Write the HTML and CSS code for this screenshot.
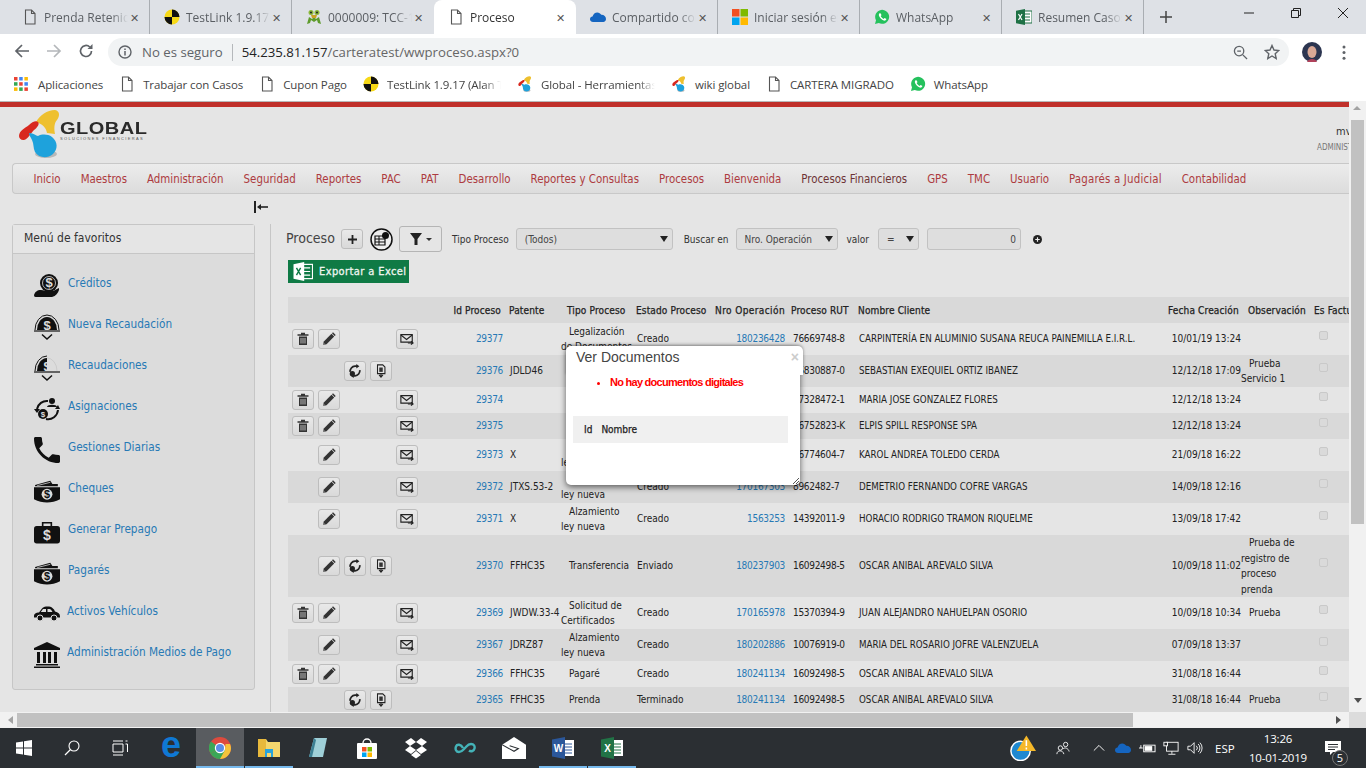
FILE: index.html
```html
<!DOCTYPE html>
<html lang="es">
<head>
    <meta charset="UTF-8">
    <title>Proceso</title>
    <link rel="stylesheet" href="styles.css">
</head>
<body>
    <!-- Iconos -->
    <svg class="defs" width="0" height="0">
        <defs>
            <symbol id="doc" viewBox="0 0 12 16"><path d="M1.5 1h6l3.500 3.500V15h-9.500z M7.500 1v3.500H11" fill="none" stroke="#555" stroke-width="1.100"/></symbol>
            <symbol id="testlink" viewBox="0 0 16 16"><circle cx="8" cy="8" r="7.500" fill="#f7d917"/><path d="M8 .5A7.500 7.500 0 0 1 15.500 8H8zM8 8v7.500A7.500 7.500 0 0 1 .5 8z" fill="#111"/></symbol>
            <symbol id="mantis" viewBox="0 0 16 16"><path d="M1 15l2-7 3 2 2-2 2 2 3-2 2 7-3-1-1-3-3 2-3-2-1 3z" fill="#5e9b2c"/><circle cx="5" cy="3.500" r="2.500" fill="#8ab83a"/><circle cx="11" cy="3.500" r="2.500" fill="#8ab83a"/><circle cx="5" cy="3.500" r="1" fill="#222"/><circle cx="11" cy="3.500" r="1" fill="#222"/><path d="M5 6h6l-1 3H6z" fill="#c9a227"/></symbol>
            <symbol id="onedrive" viewBox="0 0 18 12"><path d="M3.500 11.500C1 11.500 0 9.800 0 8.500 0 6.800 1.300 5.600 2.800 5.500 3.500 2.500 5.800.8 8.200.8c2 0 3.600 1 4.500 2.700 2.800-.2 5.300 1.900 5.300 4.700 0 1.900-1.300 3.300-3 3.300z" fill="#1565c0"/></symbol>
            <symbol id="ms" viewBox="0 0 16 16"><rect width="7.500" height="7.500" fill="#f25022"/><rect x="8.500" width="7.500" height="7.500" fill="#7fba00"/><rect y="8.500" width="7.500" height="7.500" fill="#00a4ef"/><rect x="8.500" y="8.500" width="7.500" height="7.500" fill="#ffb900"/></symbol>
            <symbol id="whatsapp" viewBox="0 0 16 16"><path d="M1 15l1-3.800A7 7 0 1 1 4.800 14z" fill="#25c15d"/><path d="M5.600 4.300c-.8.600-1 1.700-.4 3 .8 1.800 2.500 3.500 4.500 4.200 1.200.4 2.200 0 2.600-.9l-.1-.9-1.700-.8-.8 1c-1.200-.4-2.400-1.500-3-2.800l.8-.8-.7-1.800z" fill="#fff"/></symbol>
            <symbol id="excel" viewBox="0 0 16 16"><rect x="6" y="2" width="10" height="12" fill="#fff" stroke="#1e7145"/><path d="M9 5h5M9 8h5M9 11h5" stroke="#1e7145"/><path d="M0 1.800 9 0v16L0 14.200z" fill="#1e7145"/><path d="M2.500 5l3.500 6M6 5l-3.500 6" stroke="#fff" stroke-width="1.200"/></symbol>
            <symbol id="global" viewBox="0 0 42 50"><ellipse cx="27" cy="45" rx="11" ry="4" fill="#b8b8b8"/><path d="M17 13C21 6 28 1 36 1c5 1 5 6 2 10-3 3-3 9-2 14l-8-1c-1-6-5-9-11-11z" fill="#eec02f"/><path d="M0 27c0-5 6-8 10-11 3-3 7-5 9-3 2 2-1 6-4 8-3 3-6 9-10 10-3 .5-5-2-5-4z" fill="#d8281e"/><path d="M10 24c5 0 7 3 9 3 4-2 10-2 14 1 6 5 6 12 1 17-6 5-14 4-18-2-2-4-1-8-3-12-1-2-3-5-3-7z" fill="#1ea2dc"/></symbol>
            <symbol id="apps" viewBox="0 0 14 14"><g><rect width="3.500" height="3.500" fill="#ea4335"/><rect x="5.200" width="3.500" height="3.500" fill="#4285f4"/><rect x="10.400" width="3.500" height="3.500" fill="#fbbc05"/><rect y="5.200" width="3.500" height="3.500" fill="#34a853"/><rect x="5.200" y="5.200" width="3.500" height="3.500" fill="#ea4335"/><rect x="10.400" y="5.200" width="3.500" height="3.500" fill="#4285f4"/><rect y="10.400" width="3.500" height="3.500" fill="#fbbc05"/><rect x="5.200" y="10.400" width="3.500" height="3.500" fill="#34a853"/><rect x="10.400" y="10.400" width="3.500" height="3.500" fill="#ea4335"/></g></symbol>

            <symbol id="trash" viewBox="0 0 14 14"><path d="M5 1.500h4M1.500 3h11" stroke="#333" stroke-width="1.500" fill="none"/><path d="M3 4.500h8V13H3z" fill="#333"/><path d="M5 6v5.500M7 6v5.500M9 6v5.500" stroke="#ddd" stroke-width=".8"/></symbol>
            <symbol id="pencil" viewBox="0 0 14 14"><path d="M1 13l.8-3.500L9.500 1.800l2.700 2.700-7.700 7.700z" fill="#333"/><path d="M10.500.8l2.700 2.700" stroke="#333" stroke-width="1.500"/><path d="M1 13l.6-2.400 1.800 1.800z" fill="#888"/></symbol>
            <symbol id="mail" viewBox="0 0 16 14"><path d="M1 2h13v8.500H1z" fill="none" stroke="#222" stroke-width="1.300"/><path d="M1 2.500l6.500 5 6.500-5" fill="none" stroke="#222" stroke-width="1.300"/><path d="M9 11.500h5M12.500 9.500l2.500 2-2.500 2" fill="none" stroke="#222" stroke-width="1.200"/></symbol>
            <symbol id="refresh" viewBox="0 0 16 16"><path d="M2.500 9A5.800 5.800 0 0 1 8 2.500h2.500M13.500 7A5.800 5.800 0 0 1 8 13.500H5.500" fill="none" stroke="#222" stroke-width="2"/><path d="M9.500 0l3.500 2.500L9.500 5zM6.500 11L3 13.500 6.500 16z" fill="#222"/><circle cx="5" cy="11" r="3" fill="#222"/></symbol>
            <symbol id="docdown" viewBox="0 0 12 16"><path d="M2 1h6l2.500 2.500V11H2z" fill="none" stroke="#222" stroke-width="1.200"/><path d="M4 4h4v5H4z" fill="#333"/><path d="M6 11v3M3.800 12.500L6 15l2.200-2.500" fill="none" stroke="#222" stroke-width="1.200"/></symbol>

            <symbol id="credito" viewBox="0 0 26 24"><circle cx="15" cy="9" r="9" fill="#111"/><circle cx="15" cy="9" r="6.500" fill="none" stroke="#ddd" stroke-width=".8"/><text x="15" y="13" class="sym-d">$</text><path d="M0 21c1-3 3-5 7-5 3 0 4 1 6 1h5c2 0 4-2 7-3v2c-1 3-3 6-7 7H3c-2 0-3 0-3-2z" fill="#111"/></symbol>
            <symbol id="nueva" viewBox="0 0 26 26"><path d="M3 16a10 13 0 0 1 20 0z" fill="#111"/><path d="M1 16a12 15 0 0 1 24 0" fill="none" stroke="#111"/><text x="13" y="16" class="sym-d">$</text><path d="M0 17h26" stroke="#111" stroke-width="1.200"/><path d="M8 20.500l5 4.500 5-4.500" fill="none" stroke="#111" stroke-width="1.500"/></symbol>
            <symbol id="recaud" viewBox="0 0 26 26"><path d="M13 3a10 13 0 0 0-10 13h10z" fill="#111"/><path d="M1 16A12 15 0 0 1 13 1" fill="none" stroke="#111"/><path d="M13 3a10 13 0 0 1 10 13" fill="none" stroke="#ccc"/><text x="13" y="16" class="sym-d">$</text><path d="M0 17h26" stroke="#111" stroke-width="1.200"/><path d="M8 20.500l5 4.500 5-4.500" fill="none" stroke="#111" stroke-width="1.500"/></symbol>
            <symbol id="asigna" viewBox="0 0 26 24"><path d="M3 12A10 10 0 0 1 14 4M24 13a10 10 0 0 1-12 9" fill="none" stroke="#111" stroke-width="2"/><path d="M0 12l3 4 3-4zM26 12l-2-4-3 4z" fill="#111"/><circle cx="18" cy="4" r="3" fill="#111"/><path d="M13 10c0-3 10-3 10 0z" fill="#111"/><circle cx="9" cy="17" r="5" fill="#111"/><text x="9" y="20" class="sym-s">$</text></symbol>
            <symbol id="phone" viewBox="3 3 18 18"><path d="M6.620 10.790c1.440 2.830 3.760 5.140 6.590 6.590l2.200-2.200c.27-.27.67-.36 1.020-.24 1.120.37 2.330.57 3.570.57.55 0 1 .45 1 1V20c0 .55-.45 1-1 1-9.390 0-17-7.610-17-17 0-.55.45-1 1-1h3.500c.55 0 1 .45 1 1 0 1.250.2 2.450.57 3.570.11.35.03.74-.25 1.020l-2.200 2.200z" fill="#111"/></symbol>
            <symbol id="billete" viewBox="0 0 24 21"><path d="M1 5l14-4 2 3h5v2H1z" fill="#111"/><path d="M0 7h24v11c-4 2-8 3-12 3S4 20 0 18z" fill="#111"/><path d="M3 5.500l12-3" stroke="#ddd" stroke-width=".7"/><circle cx="12" cy="13.500" r="5" fill="#ddd"/><text x="12" y="17" class="sym-k">$</text></symbol>
            <symbol id="maletin" viewBox="0 0 24 21"><path d="M8 5V2h8v3" fill="none" stroke="#111" stroke-width="1.500"/><rect y="5" width="24" height="16" rx="2.500" fill="#111"/><text x="12" y="18" class="sym-d">$</text></symbol>
            <symbol id="auto" viewBox="0 0 26 15"><path d="M0 10c0-3 2-4 5-4l3-4c1-1 2-2 4-2h3c2 0 3 1 5 3l1 2c3 1 5 2 5 5v1H0z" fill="#111"/><path d="M9 2.500h3v3H6.800zM13.500 2.500h2c1 0 2 1 3 3h-5z" fill="#ddd"/><circle cx="6" cy="11.500" r="3" fill="#111" stroke="#ddd"/><circle cx="20" cy="11.500" r="3" fill="#111" stroke="#ddd"/></symbol>
            <symbol id="banco" viewBox="0 0 26 26"><path d="M13 0l13 6v2H0V6z" fill="#111"/><path d="M3 10h3v11H3zM9 10h3v11H9zM14 10h3v11h-3zM20 10h3v11h-3z" fill="#111"/><path d="M2 22h22v1.500H2zM0 24.500h26V26H0z" fill="#111"/></symbol>
        </defs>
    </svg>

    <!-- Navegador -->
    <div class="tabstrip">
        <div class="tab"><svg class="tab-ico doc-ico"><use href="#doc"/></svg><span class="tab-title">Prenda Retenida</span><span class="tab-x">&#10005;</span></div>
        <div class="tab"><svg class="tab-ico"><use href="#testlink"/></svg><span class="tab-title">TestLink 1.9.17</span><span class="tab-x">&#10005;</span></div>
        <div class="tab"><svg class="tab-ico"><use href="#mantis"/></svg><span class="tab-title">0000009: TCC-1</span><span class="tab-x">&#10005;</span></div>
        <div class="tab tab-active"><svg class="tab-ico doc-ico"><use href="#doc"/></svg><span class="tab-title">Proceso</span><span class="tab-x">&#10005;</span></div>
        <div class="tab"><svg class="tab-ico"><use href="#onedrive"/></svg><span class="tab-title">Compartido con</span><span class="tab-x">&#10005;</span></div>
        <div class="tab"><svg class="tab-ico"><use href="#ms"/></svg><span class="tab-title">Iniciar sesión en</span><span class="tab-x">&#10005;</span></div>
        <div class="tab"><svg class="tab-ico"><use href="#whatsapp"/></svg><span class="tab-title">WhatsApp</span><span class="tab-x">&#10005;</span></div>
        <div class="tab"><svg class="tab-ico"><use href="#excel"/></svg><span class="tab-title">Resumen Casos</span><span class="tab-x">&#10005;</span></div>
        <svg class="newtab" viewBox="0 0 12 12"><path d="M6 0v12M0 6h12" stroke="#444" stroke-width="1.500"/></svg>
        <div class="winbtns">
            <svg viewBox="0 0 12 12"><path d="M1 6h10" stroke="#222"/></svg>
            <svg viewBox="0 0 12 12"><path d="M1.500 3.500h7v7h-7zM3.500 3.500v-2h7v7h-2" fill="none" stroke="#222"/></svg>
            <svg viewBox="0 0 12 12"><path d="M1 1l10 10M11 1L1 11" stroke="#222"/></svg>
        </div>
    </div>
    <div class="toolbar">
        <svg class="nav-ico" viewBox="0 0 16 16"><path d="M15 8H2M8 2L2 8l6 6" fill="none" stroke="#5f6368" stroke-width="1.700"/></svg>
        <svg class="nav-ico" viewBox="0 0 16 16"><path d="M1 8h13M8 2l6 6-6 6" fill="none" stroke="#b4b7ba" stroke-width="1.700"/></svg>
        <svg class="nav-ico" viewBox="0 0 16 16"><path d="M13.500 8A5.500 5.500 0 1 1 11.800 4" fill="none" stroke="#5f6368" stroke-width="1.700"/><path d="M14.500 1v5h-5z" fill="#5f6368"/></svg>
        <div class="omnibox">
            <svg class="info" viewBox="0 0 14 14"><circle cx="7" cy="7" r="6" fill="none" stroke="#5f6368" stroke-width="1.400"/><path d="M7 6v4.500M7 3.500v1.500" stroke="#5f6368" stroke-width="1.500"/></svg>
            <span class="insecure">No es seguro</span>
            <span class="url"><b>54.235.81.157</b>/carteratest/wwproceso.aspx?0</span>
            <svg class="zoom-ico" viewBox="0 0 16 16"><circle cx="6.500" cy="6.500" r="5" fill="none" stroke="#5f6368" stroke-width="1.400"/><path d="M4.500 6.500h4M10.500 10.500L15 15" stroke="#5f6368" stroke-width="1.400"/></svg>
            <svg class="star" viewBox="0 0 16 16"><path d="M8 1.500l2 4.500 4.800.5-3.600 3.200 1 4.800L8 12l-4.200 2.500 1-4.800L1.200 6.500 6 6z" fill="none" stroke="#5f6368" stroke-width="1.400"/></svg>
        </div>
        <svg class="avatar" viewBox="0 0 20 20"><circle cx="10" cy="10" r="10" fill="#2c3550"/><ellipse cx="10" cy="10" rx="4.500" ry="6" fill="#d9a896"/><path d="M5 20c1-4 9-4 10 0z" fill="#b0415a"/></svg>
        <svg class="dots" viewBox="0 0 4 16"><circle cx="2" cy="2" r="1.600" fill="#5f6368"/><circle cx="2" cy="8" r="1.600" fill="#5f6368"/><circle cx="2" cy="14" r="1.600" fill="#5f6368"/></svg>
    </div>
    <div class="bookmarks">
        <span class="bm bm-apps"><svg class="bm-ico"><use href="#apps"/></svg>Aplicaciones</span>
        <span class="bm"><svg class="bm-ico doc-ico"><use href="#doc"/></svg>Trabajar con Casos</span>
        <span class="bm"><svg class="bm-ico doc-ico"><use href="#doc"/></svg>Cupon Pago</span>
        <span class="bm"><svg class="bm-ico"><use href="#testlink"/></svg><span class="bm-fade">TestLink 1.9.17 (Alan T</span></span>
        <span class="bm"><svg class="bm-ico"><use href="#global"/></svg><span class="bm-fade">Global - Herramientas</span></span>
        <span class="bm"><svg class="bm-ico"><use href="#global"/></svg>wiki global</span>
        <span class="bm"><svg class="bm-ico doc-ico"><use href="#doc"/></svg>CARTERA MIGRADO</span>
        <span class="bm"><svg class="bm-ico"><use href="#whatsapp"/></svg>WhatsApp</span>
    </div>

    <!-- Pagina -->
    <div class="viewport">
        <div class="viewport-row">
            <div class="page">
                <div class="page-head">
                    <div class="logo">
                        <svg class="logo-mark"><use href="#global"/></svg>
                        <div class="logo-text">
                            <div class="logo-name">GLOBAL</div>
                            <div class="logo-sub">SOLUCIONES FINANCIERAS</div>
                        </div>
                    </div>
                    <div class="user">
                        <div class="user-name">mvargas</div>
                        <div class="user-role">ADMINISTRADOR</div>
                    </div>
                </div>

                <ul class="menu">
                    <li>Inicio</li>
                    <li>Maestros</li>
                    <li>Administración</li>
                    <li>Seguridad</li>
                    <li>Reportes</li>
                    <li>PAC</li>
                    <li>PAT</li>
                    <li>Desarrollo</li>
                    <li>Reportes y Consultas</li>
                    <li>Procesos</li>
                    <li>Bienvenida</li>
                    <li class="menu-hover">Procesos Financieros</li>
                    <li>GPS</li>
                    <li>TMC</li>
                    <li>Usuario</li>
                    <li class="menu-wide">Pagarés a Judicial</li>
                    <li>Contabilidad</li>
                </ul>

                <div class="collapse-row">
                    <svg class="collapse" viewBox="0 0 14 12"><path d="M1 0v12" stroke="#222" stroke-width="2"/><path d="M14 6H5" stroke="#222" stroke-width="1.600"/><path d="M3 6l4-3v6z" fill="#222"/></svg>
                </div>

                <div class="main">
                    <aside class="favs">
                        <div class="favs-head">Menú de favoritos</div>
                        <ul class="favs-list">
                            <li><svg class="fav-ico"><use href="#credito"/></svg><a>Créditos</a></li>
                            <li><svg class="fav-ico"><use href="#nueva"/></svg><a>Nueva Recaudación</a></li>
                            <li><svg class="fav-ico"><use href="#recaud"/></svg><a>Recaudaciones</a></li>
                            <li><svg class="fav-ico"><use href="#asigna"/></svg><a>Asignaciones</a></li>
                            <li><svg class="fav-ico"><use href="#phone"/></svg><a>Gestiones Diarias</a></li>
                            <li><svg class="fav-ico"><use href="#billete"/></svg><a>Cheques</a></li>
                            <li><svg class="fav-ico"><use href="#maletin"/></svg><a>Generar Prepago</a></li>
                            <li><svg class="fav-ico"><use href="#billete"/></svg><a>Pagarés</a></li>
                            <li class="fav-wide"><svg class="fav-ico"><use href="#auto"/></svg><a>Activos Vehículos</a></li>
                            <li class="fav-wide"><svg class="fav-ico"><use href="#banco"/></svg><a>Administración Medios de Pago</a></li>
                        </ul>
                    </aside>

                    <section class="content">
                        <div class="filters">
                            <span class="content-title">Proceso</span>
                            <button class="btn btn-plus"><svg viewBox="0 0 10 10"><path d="M5 0v10M0 5h10" stroke="#222" stroke-width="2"/></svg></button>
                            <svg class="round-ico" viewBox="0 0 23 23"><circle cx="11.500" cy="11.500" r="10.500" fill="#eee" stroke="#111" stroke-width="1.500"/><path d="M5 8h10v9H5z" fill="none" stroke="#111" stroke-width="1.200"/><path d="M5 11h10M5 14h10M9 8v9" stroke="#111"/><circle cx="15.500" cy="7.500" r="3.500" fill="#111"/></svg>
                            <button class="btn btn-filter"><svg viewBox="0 0 12 12"><path d="M0 0h12L7.500 6v6h-3V6z" fill="#222"/></svg><i class="caret"></i></button>
                            <label class="flabel label-tipo">Tipo Proceso</label>
                            <div class="sel sel-tipo">(Todos)<i class="tri"></i></div>
                            <label class="flabel label-buscar">Buscar en</label>
                            <div class="sel sel-buscar">Nro. Operación<i class="tri"></i></div>
                            <label class="flabel label-valor">valor</label>
                            <div class="sel sel-op">=<i class="tri"></i></div>
                            <div class="sel sel-val">0</div>
                            <svg class="plus-circle" viewBox="0 0 10 10"><circle cx="5" cy="5" r="5" fill="#222"/><path d="M5 2.500v5M2.500 5h5" stroke="#eee" stroke-width="1.300"/></svg>
                        </div>

                        <button class="export"><svg viewBox="0 0 16 16"><rect x="6" y="2" width="10" height="12" fill="none" stroke="#fff"/><path d="M8 5h6M8 8h6M8 11h6" stroke="#fff"/><path d="M0 1.800 9 0v16L0 14.200z" fill="#fff"/><path d="M2.500 5l3.500 6M6 5l-3.500 6" stroke="#0f7a45" stroke-width="1.200"/></svg>Exportar a Excel</button>

                        <table class="grid">
                            <colgroup>
                                <col class="c-act"><col class="c-id"><col class="c-pat"><col class="c-tipo"><col class="c-est"><col class="c-op"><col class="c-rut"><col class="c-cli"><col class="c-fec"><col class="c-obs"><col class="c-fac">
                            </colgroup>
                            <thead>
                                <tr>
                                    <th></th>
                                    <th class="r">Id Proceso</th>
                                    <th>Patente</th>
                                    <th class="th-tipo">Tipo Proceso</th>
                                    <th>Estado Proceso</th>
                                    <th class="r">Nro Operación</th>
                                    <th>Proceso RUT</th>
                                    <th class="th-cli">Nombre Cliente</th>
                                    <th class="th-fec">Fecha Creación</th>
                                    <th class="th-obs">Observación</th>
                                    <th class="th-fac">Es Factura</th>
                                </tr>
                            </thead>
                            <tbody>
                                <tr class="h32">
                                    <td><div class="acts"><button class="btn a1"><svg><use href="#trash"/></svg></button><button class="btn a2"><svg><use href="#pencil"/></svg></button><button class="btn a5"><svg><use href="#mail"/></svg></button></div></td>
                                    <td class="r"><a>29377</a></td><td class="pat"></td><td class="ind">Legalización de Documentos</td><td class="est">Creado</td><td class="r"><a>180236428</a></td><td class="rut">76669748-8</td><td class="cli">CARPINTERÍA EN ALUMINIO SUSANA REUCA PAINEMILLA E.I.R.L.</td><td class="fec">10/01/19 13:24</td><td class="ind"></td><td class="fac"><i class="chk"></i></td>
                                </tr>
                                <tr class="h32">
                                    <td><div class="acts"><button class="btn a3"><svg><use href="#refresh"/></svg></button><button class="btn a4"><svg><use href="#docdown"/></svg></button></div></td>
                                    <td class="r"><a>29376</a></td><td class="pat">JDLD46</td><td class="ind">Prenda</td><td class="est">Enviado</td><td class="r"><a>180236101</a></td><td class="rut">15830887-0</td><td class="cli">SEBASTIAN EXEQUIEL ORTIZ IBANEZ</td><td class="fec">12/12/18 17:09</td><td class="ind">Prueba Servicio 1</td><td class="fac"><i class="chk"></i></td>
                                </tr>
                                <tr class="h26">
                                    <td><div class="acts"><button class="btn a1"><svg><use href="#trash"/></svg></button><button class="btn a2"><svg><use href="#pencil"/></svg></button><button class="btn a5"><svg><use href="#mail"/></svg></button></div></td>
                                    <td class="r"><a>29374</a></td><td class="pat"></td><td class="ind">Pagaré</td><td class="est">Creado</td><td class="r"><a>180235907</a></td><td class="rut">17328472-1</td><td class="cli">MARIA JOSE GONZALEZ FLORES</td><td class="fec">12/12/18 13:24</td><td class="ind"></td><td class="fac"><i class="chk"></i></td>
                                </tr>
                                <tr class="h26">
                                    <td><div class="acts"><button class="btn a1"><svg><use href="#trash"/></svg></button><button class="btn a2"><svg><use href="#pencil"/></svg></button><button class="btn a5"><svg><use href="#mail"/></svg></button></div></td>
                                    <td class="r"><a>29375</a></td><td class="pat"></td><td class="ind">Pagaré</td><td class="est">Creado</td><td class="r"><a>180235908</a></td><td class="rut">76752823-K</td><td class="cli">ELPIS SPILL RESPONSE SPA</td><td class="fec">12/12/18 13:24</td><td class="ind"></td><td class="fac"><i class="chk"></i></td>
                                </tr>
                                <tr class="h32">
                                    <td><div class="acts"><button class="btn a2"><svg><use href="#pencil"/></svg></button><button class="btn a5"><svg><use href="#mail"/></svg></button></div></td>
                                    <td class="r"><a>29373</a></td><td class="pat">X</td><td class="ind">Alzamiento ley nueva</td><td class="est">Creado</td><td class="r"><a>170167310</a></td><td class="rut">16774604-7</td><td class="cli">KAROL ANDREA TOLEDO CERDA</td><td class="fec">21/09/18 16:22</td><td class="ind"></td><td class="fac"><i class="chk"></i></td>
                                </tr>
                                <tr class="h32">
                                    <td><div class="acts"><button class="btn a2"><svg><use href="#pencil"/></svg></button><button class="btn a5"><svg><use href="#mail"/></svg></button></div></td>
                                    <td class="r"><a>29372</a></td><td class="pat">JTXS.53-2</td><td class="ind">Alzamiento ley nueva</td><td class="est">Creado</td><td class="r"><a>170167303</a></td><td class="rut">8962482-7</td><td class="cli">DEMETRIO FERNANDO COFRE VARGAS</td><td class="fec">14/09/18 12:16</td><td class="ind"></td><td class="fac"><i class="chk"></i></td>
                                </tr>
                                <tr class="h32">
                                    <td><div class="acts"><button class="btn a2"><svg><use href="#pencil"/></svg></button><button class="btn a5"><svg><use href="#mail"/></svg></button></div></td>
                                    <td class="r"><a>29371</a></td><td class="pat">X</td><td class="ind">Alzamiento ley nueva</td><td class="est">Creado</td><td class="r"><a>1563253</a></td><td class="rut">14392011-9</td><td class="cli">HORACIO RODRIGO TRAMON RIQUELME</td><td class="fec">13/09/18 17:42</td><td class="ind"></td><td class="fac"><i class="chk"></i></td>
                                </tr>
                                <tr class="h62">
                                    <td><div class="acts"><button class="btn a2"><svg><use href="#pencil"/></svg></button><button class="btn a3"><svg><use href="#refresh"/></svg></button><button class="btn a4"><svg><use href="#docdown"/></svg></button></div></td>
                                    <td class="r"><a>29370</a></td><td class="pat">FFHC35</td><td class="ind">Transferencia</td><td class="est">Enviado</td><td class="r"><a>180237903</a></td><td class="rut">16092498-5</td><td class="cli">OSCAR ANIBAL AREVALO SILVA</td><td class="fec">10/09/18 11:02</td><td class="ind">Prueba de registro de proceso prenda</td><td class="fac"><i class="chk"></i></td>
                                </tr>
                                <tr class="h32">
                                    <td><div class="acts"><button class="btn a1"><svg><use href="#trash"/></svg></button><button class="btn a2"><svg><use href="#pencil"/></svg></button><button class="btn a5"><svg><use href="#mail"/></svg></button></div></td>
                                    <td class="r"><a>29369</a></td><td class="pat">JWDW.33-4</td><td class="ind">Solicitud de Certificados</td><td class="est">Creado</td><td class="r"><a>170165978</a></td><td class="rut">15370394-9</td><td class="cli">JUAN ALEJANDRO NAHUELPAN OSORIO</td><td class="fec">10/09/18 10:34</td><td class="ind">Prueba</td><td class="fac"><i class="chk"></i></td>
                                </tr>
                                <tr class="h32">
                                    <td><div class="acts"><button class="btn a2"><svg><use href="#pencil"/></svg></button><button class="btn a5"><svg><use href="#mail"/></svg></button></div></td>
                                    <td class="r"><a>29367</a></td><td class="pat">JDRZ87</td><td class="ind">Alzamiento ley nueva</td><td class="est">Creado</td><td class="r"><a>180202886</a></td><td class="rut">10076919-0</td><td class="cli">MARIA DEL ROSARIO JOFRE VALENZUELA</td><td class="fec">07/09/18 13:37</td><td class="ind"></td><td class="fac"><i class="chk"></i></td>
                                </tr>
                                <tr class="h26">
                                    <td><div class="acts"><button class="btn a1"><svg><use href="#trash"/></svg></button><button class="btn a2"><svg><use href="#pencil"/></svg></button><button class="btn a5"><svg><use href="#mail"/></svg></button></div></td>
                                    <td class="r"><a>29366</a></td><td class="pat">FFHC35</td><td class="ind">Pagaré</td><td class="est">Creado</td><td class="r"><a>180241134</a></td><td class="rut">16092498-5</td><td class="cli">OSCAR ANIBAL AREVALO SILVA</td><td class="fec">31/08/18 16:44</td><td class="ind"></td><td class="fac"><i class="chk"></i></td>
                                </tr>
                                <tr class="h26">
                                    <td><div class="acts"><button class="btn a3"><svg><use href="#refresh"/></svg></button><button class="btn a4"><svg><use href="#docdown"/></svg></button></div></td>
                                    <td class="r"><a>29365</a></td><td class="pat">FFHC35</td><td class="ind">Prenda</td><td class="est">Terminado</td><td class="r"><a>180241134</a></td><td class="rut">16092498-5</td><td class="cli">OSCAR ANIBAL AREVALO SILVA</td><td class="fec">31/08/18 16:44</td><td class="ind">Prueba</td><td class="fac"><i class="chk"></i></td>
                                </tr>
                            </tbody>
                        </table>
                    </section>
                </div>

                <!-- Ventana Ver Documentos -->
                <div class="modal">
                    <div class="modal-head"><span>Ver Documentos</span><span class="modal-x">&times;</span></div>
                    <ul class="modal-msg"><li>No hay documentos digitales</li></ul>
                    <div class="modal-row"><b>Id</b><b>Nombre</b></div>
                    <svg class="grip" viewBox="0 0 6 6"><path d="M0 6l6-6M3 6l3-3" stroke="#555"/></svg>
                </div>
            </div>
            <div class="vscroll">
                <i class="arr arr-up"></i>
                <div class="vtrack"><div class="vthumb"></div></div>
                <i class="arr arr-down"></i>
            </div>
        </div>
        <div class="hscroll">
            <i class="arr arr-left"></i>
            <div class="htrack"><div class="hthumb"></div></div>
            <i class="arr arr-right"></i>
            <div class="corner"></div>
        </div>
    </div>

    <!-- Barra de tareas -->
    <div class="taskbar">
        <div class="tb-item tb-sys"><svg viewBox="0 0 16 16"><path d="M0 2.500l7-1v6H0zM8 1.300L16 0v7.500H8zM0 8.500h7v6l-7-1zM8 8.500h8V16l-8-1.300z" fill="#fff"/></svg></div>
        <div class="tb-item tb-sys"><svg viewBox="0 0 16 16"><circle cx="10" cy="6" r="5" fill="none" stroke="#fff" stroke-width="1.100"/><path d="M6.500 9.500L1 15" stroke="#fff" stroke-width="1.300"/></svg></div>
        <div class="tb-item tb-sys"><svg viewBox="0 0 16 16"><path d="M1 4h10v8H1zM1 1h10M1 15h10M13.500 1h2M13.500 4h2v8" fill="none" stroke="#fff"/></svg></div>
        <div class="tb-item tb-gap"><svg class="big" viewBox="0 0 22 22"><text x="11" y="20" class="sym-e">e</text></svg></div>
        <div class="tb-item tb-active tb-open"><svg class="big" viewBox="0 0 22 22"><circle cx="11" cy="11" r="11" fill="#dd4b3e"/><path d="M11 11L1.500 16.500A11 11 0 0 1 2 4.500z" fill="#3aa757"/><path d="M11 22A11 11 0 0 1 1.500 16.500L11 11 16.500 11A11 11 0 0 1 11 22z" fill="#3aa757"/><path d="M22 11A11 11 0 0 1 11 22l5-9 .5-6H21a11 11 0 0 1 1 4z" fill="#f5c33b"/><circle cx="11" cy="11" r="5.200" fill="#fff"/><circle cx="11" cy="11" r="4" fill="#5b8ee6"/></svg></div>
        <div class="tb-item tb-open"><svg class="big" viewBox="0 0 22 22"><path d="M0 2h8l2 3h12v15H0z" fill="#f5d76e"/><path d="M0 2h8v18H0z" fill="#e8b93c"/><path d="M7 12h8v8h-2v-4H9v4H7z" fill="#27a3dc"/></svg></div>
        <div class="tb-item"><svg class="big" viewBox="0 0 22 22"><path d="M7 1h13l-4 19H2z" fill="#9fd0d8"/><path d="M2 20L7 1l2 2-4 17z" fill="#3c7f93"/></svg></div>
        <div class="tb-item"><svg class="big" viewBox="0 0 22 22"><path d="M7 6a4 4 0 0 1 8 0" fill="none" stroke="#fff" stroke-width="1.300"/><rect x="1" y="6" width="20" height="16" rx="1" fill="#fff"/><rect x="6" y="10" width="4.500" height="4.500" fill="#f25022"/><rect x="11.500" y="10" width="4.500" height="4.500" fill="#7fba00"/><rect x="6" y="15.500" width="4.500" height="4.500" fill="#00a4ef"/><rect x="11.500" y="15.500" width="4.500" height="4.500" fill="#ffb900"/></svg></div>
        <div class="tb-item"><svg class="big wide" viewBox="0 0 22 22"><path d="M6 1L0 5l5 4 6-4zM16 1l6 4-5 4-6-4zM5 9l-5 4 6 4 5-4zM17 9l5 4-6 4-5-4zM11 14l-5 4 5 3.500 5-3.500z" fill="#fff"/></svg></div>
        <div class="tb-item"><svg class="big" viewBox="0 0 22 16"><path d="M9 8C7 4 3 4 2 6.500S2 12 5 12s4-2 6-4 3-4 6-4 4 2 3.500 4.500S17 12 15 10.500" fill="none" stroke="#44b3b8" stroke-width="2.400"/></svg></div>
        <div class="tb-item"><svg class="big wide" viewBox="0 0 22 20"><path d="M0 7l11-7 11 7v13H0z" fill="#fff"/><path d="M0 7l11 6 4-2.500L7 8" fill="none" stroke="#2b2f33"/></svg></div>
        <div class="tb-item tb-open"><svg class="big" viewBox="0 0 22 22"><rect x="8" y="3" width="14" height="16" fill="#fff"/><path d="M11 7h9M11 10h9M11 13h9M11 16h9" stroke="#2b579a"/><path d="M0 2.500L13 0v22L0 19.500z" fill="#2b579a"/><text x="6.500" y="15" class="sym-w">W</text></svg></div>
        <div class="tb-item tb-open"><svg class="big" viewBox="0 0 22 22"><rect x="8" y="3" width="14" height="16" fill="#fff"/><path d="M11 7h9M11 10h9M11 13h9M11 16h9" stroke="#217346"/><path d="M0 2.500L13 0v22L0 19.500z" fill="#217346"/><text x="6.500" y="15" class="sym-w">X</text></svg></div>

        <div class="tray">
            <svg class="tr-warn" viewBox="0 0 30 26"><circle cx="13" cy="16" r="10" fill="#1e88d0" stroke="#fff" stroke-width="1.500"/><path d="M19 0l10 16H9z" fill="#f5b829"/><path d="M19 5v6M19 12.500v2" stroke="#fff" stroke-width="1.600"/></svg>
            <svg class="tr-people" viewBox="0 0 16 16"><circle cx="5" cy="8" r="2.500" fill="none" stroke="#fff"/><circle cx="11" cy="4" r="2.500" fill="none" stroke="#fff"/><path d="M1 15c0-5 7-5 8 0M8 9c2-2 6-1 7 3" fill="none" stroke="#fff"/></svg>
            <svg class="tr-chev" viewBox="0 0 14 8"><path d="M1 7l6-6 6 6" fill="none" stroke="#fff" stroke-width="1.100"/></svg>
            <svg class="tr-one"><use href="#onedrive"/></svg>
            <svg class="tr-pow" viewBox="0 0 18 12"><rect x="5" y="3" width="12" height="7" fill="none" stroke="#fff"/><rect x="6" y="4" width="8" height="5" fill="#fff"/><path d="M0 6h4M2 3v3" stroke="#fff"/></svg>
            <svg class="tr-net" viewBox="0 0 18 16"><rect x="4" y="1" width="13" height="10" fill="none" stroke="#fff"/><path d="M10 11v3M6 14.500h8" stroke="#fff"/><rect x="1" y="1" width="4" height="4" fill="#2b2f33" stroke="#fff"/></svg>
            <svg class="tr-vol" viewBox="0 0 18 14"><path d="M1 5h3l4-4v12l-4-4H1z" fill="none" stroke="#fff"/><path d="M10.500 4.500a3.500 3.500 0 0 1 0 5M12.500 2.500a6 6 0 0 1 0 9M14.500 1a8.500 8.500 0 0 1 0 12" fill="none" stroke="#fff"/></svg>
            <span class="tr-lang">ESP</span>
            <div class="clock"><div>13:26</div><div>10-01-2019</div></div>
            <div class="notif">
                <svg viewBox="0 0 16 15"><path d="M0 0h16v11H8l-3 3v-3H0z" fill="#fff"/><path d="M3 3.500h10M3 6h10M3 8.500h7" stroke="#2b2f33"/></svg>
                <span class="notif-n">5</span>
            </div>
        </div>
    </div>
</body>
</html>
```

FILE: styles.css
```css
* {
    box-sizing: border-box;
}
html, body {
    margin: 0;
    height: 768px;
    overflow: hidden;
}
body {
    display: flex;
    flex-direction: column;
    font-family: "Open Sans", "Noto Sans", sans-serif;
    background-color: #fff;
}
.defs {
    position: absolute;
}
.sym-d, .sym-s, .sym-k, .sym-w, .sym-e {
    font-family: "Liberation Sans", sans-serif;
    font-weight: bold;
    text-anchor: middle;
}
.sym-d { font-size: 13px; fill: #ddd; }
.sym-s { font-size: 8px; fill: #ddd; }
.sym-k { font-size: 10px; fill: #111; }
.sym-w { font-size: 10px; fill: #fff; }
.sym-e { font-size: 36px; fill: #0f78d4; }

/* Pestañas */
.tabstrip {
    height: 34px;
    background-color: #dee1e6;
    display: flex;
    padding-left: 8px;
    position: relative;
}
.tab {
    width: 142px;
    height: 34px;
    display: flex;
    align-items: center;
    padding-left: 14px;
    font-size: 12px;
    color: #5a5e63;
    position: relative;
    border-right: 1px solid #a9adb2;
    background-clip: content-box;
}
.tab:nth-child(3) {
    border-right: 0;
}
.tab-active {
    background-color: #fff;
    background-clip: border-box;
    border-right: 0;
    border-radius: 8px 8px 0 0;
    color: #333;
    margin-left: 0;
}
.tab-ico {
    width: 16px;
    height: 16px;
    flex: none;
}
.doc-ico {
    width: 12px;
}
.tab-ico.doc-ico {
    margin-left: 2px;
    margin-right: 2px;
}
.tab-title {
    width: 84px;
    margin-left: 6px;
    white-space: nowrap;
    overflow: hidden;
    -webkit-mask-image: linear-gradient(90deg, #000 80%, transparent);
    mask-image: linear-gradient(90deg, #000 80%, transparent);
}
.tab-x {
    font-size: 11px;
    margin-left: 2px;
    color: #555;
}
.newtab {
    width: 12px;
    height: 12px;
    margin: 11px 0 0 16px;
}
.winbtns {
    margin-left: auto;
    display: flex;
    gap: 35px;
    padding: 7px 17px 0 0;
}
.winbtns svg {
    width: 12px;
    height: 12px;
}

/* Barra de direccion */
.toolbar {
    height: 33px;
    background-color: #fff;
    display: flex;
    align-items: center;
    padding-left: 14px;
}
.nav-ico {
    width: 16px;
    height: 16px;
    margin-right: 16px;
}
.omnibox {
    width: 1181px;
    height: 28px;
    margin: 3px 0 0 -2px;
    background-color: #f1f3f4;
    border-radius: 14px;
    display: flex;
    align-items: center;
    padding-left: 10px;
    font-size: 13.200px;
    color: #5f6368;
}
.info {
    width: 14px;
    height: 14px;
}
.insecure {
    margin-left: 10px;
    padding-right: 9px;
    border-right: 1px solid #b5b8bb;
    line-height: 17px;
}
.url {
    margin-left: 9px;
    color: #666;
}
.url b {
    font-weight: 400;
    color: #222;
}
.zoom-ico {
    width: 15px;
    height: 15px;
    margin-left: auto;
}
.star {
    width: 16px;
    height: 16px;
    margin: 0 9px 0 16px;
}
.avatar {
    width: 20px;
    height: 20px;
    margin: 2px 0 0 13px;
}
.dots {
    width: 4px;
    height: 15px;
    margin: 3px 0 0 20px;
}

/* Marcadores */
.bookmarks {
    height: 34px;
    background-color: #fff;
    display: flex;
    align-items: center;
    padding-left: 14px;
    font-size: 11.500px;
    letter-spacing: -0.1px;
    color: #444;
    gap: 16px;
}
.bm {
    display: flex;
    align-items: center;
    white-space: nowrap;
}
.bm-ico {
    width: 16px;
    height: 16px;
    margin-right: 8px;
}
.bm-apps .bm-ico {
    width: 14px;
    height: 14px;
    margin-right: 10px;
}
.bm .doc-ico {
    width: 12px;
    margin-left: 2px;
    margin-right: 10px;
}
.bm-fade {
    width: 114px;
    overflow: hidden;
    -webkit-mask-image: linear-gradient(90deg, #000 85%, transparent);
    mask-image: linear-gradient(90deg, #000 85%, transparent);
}

/* Ventana de la pagina */
.viewport {
    height: 627px;
    display: flex;
    flex-direction: column;
}
.viewport-row {
    flex: 1;
    display: flex;
    min-height: 0;
}
.page {
    width: 1349px;
    position: relative;
    overflow: hidden;
    background-color: #e5e5e5;
    border-top: 1px solid #b9b9b9;
    font-family: "DejaVu Sans Condensed", "DejaVu Sans", sans-serif;
    font-size: 11px;
    color: #222;
}
.page::before {
    content: "";
    display: block;
    height: 5px;
    background-color: #c0302a;
}
.page-head {
    height: 56px;
    display: flex;
    justify-content: space-between;
}
.logo {
    display: flex;
    padding: 2px 0 0 19px;
}
.logo-mark {
    width: 42px;
    height: 50px;
    flex: none;
}
.logo-text {
    margin-left: -1px;
    padding-top: 12px;
}
.logo-name {
    font-family: "Liberation Sans", sans-serif;
    font-weight: bold;
    font-size: 16px;
    line-height: 15px;
    letter-spacing: 0.4px;
    transform: scaleX(1.25);
    transform-origin: left;
    color: #2a2a2a;
}
.logo-sub {
    font-family: "Liberation Sans", sans-serif;
    font-size: 4px;
    line-height: 6px;
    letter-spacing: 1.35px;
    color: #555;
    white-space: nowrap;
}
.user {
    width: 100px;
    margin-right: -87px;
    padding-top: 18px;
    white-space: nowrap;
}
.user-name {
    font-size: 11px;
    line-height: 14px;
    color: #333;
}
.user-role {
    font-size: 8px;
    line-height: 14px;
    margin-top: 2px;
    color: #777;
    margin-left: -19px;
}
.menu {
    list-style: none;
    margin: 0 -2px 0 12px;
    padding: 1px 0 0 10.500px;
    height: 31px;
    display: flex;
    align-items: center;
    background: linear-gradient(#ececec, #dcdcdc);
    border: 1px solid #c8c8c8;
    border-right: 0;
    border-radius: 4px 0 0 4px;
    font-size: 11.400px;
    color: #ad3b40;
}
.menu li {
    padding: 0 10px;
    white-space: nowrap;
}
.menu-hover {
    color: #6d3436;
}
.menu-wide {
    letter-spacing: 0.17px;
}
.collapse-row {
    height: 30px;
    padding: 7px 0 0 254px;
}
.collapse {
    width: 14px;
    height: 12px;
    display: block;
}
.main {
    display: flex;
    height: 488px;
}

/* Favoritos */
.favs {
    width: 243px;
    height: 466px;
    margin-left: 12px;
    flex: none;
    border: 1px solid #c6c6c6;
    border-radius: 3px;
    background-color: #dcdcdc;
}
.favs-head {
    height: 29px;
    padding: 0 0 0 11px;
    line-height: 26px;
    font-size: 12px;
    color: #333;
    background-color: #e5e5e5;
    border-bottom: 1px solid #c6c6c6;
}
.favs-list {
    list-style: none;
    margin: 0;
    padding: 17px 0 0 21px;
}
.favs-list li {
    height: 41px;
    display: flex;
    align-items: flex-start;
    padding-top: 2px;
}
.favs-list a, .grid a {
    color: #2779b5;
}
.favs-list a {
    font-size: 11.700px;
    line-height: 16px;
    margin: 2px 0 0 8px;
    white-space: nowrap;
}
.fav-wide a {
    margin-left: 7px;
}
.fav-ico {
    width: 26px;
    height: 26px;
    flex: none;
}

/* Contenido */
.content {
    margin-left: 15px;
    flex: none;
    width: 1079px;
    border-left: 1px solid #c6c6c6;
    padding-left: 15px;
}
.filters {
    height: 30px;
    display: flex;
    align-items: center;
    white-space: nowrap;
}
.content-title {
    font-size: 14px;
    color: #444;
    width: 55px;
    margin-top: -2px;
}
.btn {
    padding: 0;
    display: inline-flex;
    align-items: center;
    justify-content: center;
    background: linear-gradient(#e9e9e9, #d9d9d9);
    border: 1px solid #bdbdbd;
    border-radius: 3px;
}
.btn-plus {
    width: 22px;
    height: 20px;
}
.btn-plus svg {
    width: 9px;
    height: 9px;
}
.round-ico {
    width: 23px;
    height: 23px;
    margin-left: 7px;
}
.btn-filter {
    width: 43px;
    height: 26px;
    margin-left: 6px;
    background: #e5e5e5;
    gap: 4px;
    border-color: #b5b5b5;
}
.btn-filter svg {
    width: 12px;
    height: 12px;
}
.caret {
    border: 3px solid transparent;
    border-top-color: #333;
    margin-top: 3px;
}
.flabel {
    font-size: 10px;
    color: #333;
}
.label-tipo { margin-left: 10px; }
.label-buscar { margin-left: 11px; }
.label-valor { margin-left: 9px; }
.sel {
    height: 22px;
    display: flex;
    align-items: center;
    justify-content: space-between;
    padding: 0 4px 0 8px;
    font-size: 10px;
    color: #444;
    background-color: #dedede;
    border: 1px solid #c2c2c2;
    border-radius: 3px;
}
.tri {
    border: 4px solid transparent;
    border-top: 6px solid #222;
    border-bottom: 0;
}
.sel-tipo { width: 157px; margin-left: 7px; }
.sel-buscar { width: 102px; margin-left: 7px; }
.sel-op { width: 41px; margin-left: 9px; }
.sel-val {
    width: 94px;
    margin-left: 8px;
    justify-content: flex-end;
    padding-right: 4px;
}
.plus-circle {
    width: 9px;
    height: 9px;
    margin-left: 12px;
}
.export {
    display: flex;
    align-items: center;
    width: 121px;
    height: 23px;
    margin: 6px 0 14px 2px;
    padding: 0 0 0 5px;
    border: 0;
    background-color: #0f7a45;
    color: #eef5ef;
    font-family: inherit;
    font-size: 11px;
    letter-spacing: 0.4px;
    -webkit-text-stroke: 0.3px #eef5ef;
    white-space: nowrap;
}
.export svg {
    width: 20px;
    height: 19px;
    margin-right: 6px;
    flex: none;
}

/* Tabla */
.grid {
    table-layout: fixed;
    width: 1112px;
    margin-left: 2px;
    border-collapse: collapse;
    font-size: 10px;
}
.c-act { width: 162px; }
.c-id { width: 56px; }
.c-pat { width: 53px; }
.c-tipo { width: 75px; }
.c-est { width: 77px; }
.c-op { width: 77px; }
.c-rut { width: 68px; }
.c-cli { width: 309px; }
.c-fec { width: 76px; }
.c-obs { width: 69px; }
.c-fac { width: 90px; }
.grid th {
    height: 26px;
    padding: 0 0 0 3px;
    text-align: left;
    font-weight: 400;
    white-space: nowrap;
    letter-spacing: 0.15px;
    background-color: #d9d9d9;
    -webkit-text-stroke: 0.25px #222;
}
.grid th.r {
    text-align: right;
    padding: 0 5px 0 0;
}
.grid th:nth-child(6) { padding-right: 3px; letter-spacing: 0.4px; }
.grid th.th-tipo { padding-left: 8px; }
.grid th:nth-child(5) { padding-left: 2px; }
.grid th.th-cli { padding-left: 2px; }
.grid th.th-fec { padding-left: 3px; }
.grid th.th-obs { padding-left: 7px; }
.grid th.th-fac { padding-left: 4px; }
.grid td {
    padding: 0 0 0 4px;
    line-height: 15.500px;
    vertical-align: middle;
}
.grid td:first-child { padding: 0; }
.grid td a { letter-spacing: -0.3px; }
.grid tbody tr:nth-child(even) td {
    background-color: #d9d9d9;
}
.grid td.r {
    text-align: right;
    padding: 0 3px 0 0;
}
.grid td.pat { white-space: nowrap; }
.grid td.ind {
    padding: 0 0 0 2px;
    text-indent: 8px;
}
.grid td:nth-child(10) { padding-left: 0; }
.grid td.est { padding-left: 3px; }
.grid td.rut { padding-left: 5px; white-space: nowrap; letter-spacing: -0.3px; }
.grid td.cli { padding-left: 3px; white-space: nowrap; font-size: 9.700px; }
.grid td.fec { padding: 0; text-align: right; white-space: nowrap; }
.grid td.fac { padding-left: 9px; }
.h26 { height: 26px; }
.h32 { height: 32px; }
.h62 { height: 62px; }
.acts {
    display: grid;
    grid-template-columns: repeat(5, 22px);
    column-gap: 4px;
    padding-left: 4px;
}
.acts .btn {
    height: 20px;
    grid-row: 1;
}
.acts svg {
    width: 14px;
    height: 14px;
}
.a1 { grid-column: 1; }
.a2 { grid-column: 2; }
.a3 { grid-column: 3; }
.a4 { grid-column: 4; }
.a5 { grid-column: 5; }
.chk {
    display: block;
    width: 9px;
    height: 9px;
    margin-bottom: 7px;
    background-color: #dadada;
    border: 1px solid #c9c9c9;
    border-radius: 2px;
}

/* Ventana Ver Documentos */
.modal {
    position: absolute;
    left: 566px;
    top: 244px;
    width: 234px;
    height: 139px;
    background-color: #fff;
    border-radius: 5px;
    box-shadow: 0 2px 6px rgba(0,0,0,0.6);
    font-family: "Liberation Sans", sans-serif;
}
.modal-head {
    height: 29px;
    margin-right: -3px;
    padding: 3px 0 0 10px;
    background-color: #fff;
    border-radius: 5px 5px 0 0;
    display: flex;
    justify-content: space-between;
    font-size: 14px;
    line-height: 17px;
    color: #444;
    box-shadow: 0 -1px 3px rgba(0,0,0,0.3);
}
.modal-x {
    font-size: 14px;
    font-weight: bold;
    color: #ccc;
    margin-right: 4px;
}
.modal-msg {
    position: relative;
    margin: 0;
    padding: 0 0 0 44px;
    height: 41px;
    background-color: #fff;
    color: #f00;
    font-size: 11px;
    font-weight: bold;
    letter-spacing: -0.73px;
    line-height: 14px;
}
.modal-row {
    margin: 0 12px 0 7px;
    height: 27px;
    padding: 0 0 1px 11px;
    display: flex;
    align-items: center;
    gap: 9px;
    background-color: #f0f0f0;
    font-family: "DejaVu Sans Condensed", "DejaVu Sans", sans-serif;
    font-size: 10px;
    color: #222;
}
.modal-row b {
    font-weight: 400;
    -webkit-text-stroke: 0.25px #222;
}
.grip {
    position: absolute;
    right: 1px;
    bottom: 1px;
    width: 6px;
    height: 6px;
}

/* Barras de desplazamiento */
.vscroll {
    width: 17px;
    display: flex;
    flex-direction: column;
    background-color: #f1f1f1;
}
.vtrack {
    flex: 1;
    padding-top: 1px;
}
.vthumb {
    width: 13px;
    height: 404px;
    margin-left: 2px;
    background-color: #c1c1c1;
}
.hscroll {
    height: 16px;
    display: flex;
    background-color: #f1f1f1;
}
.htrack {
    flex: 1;
}
.hthumb {
    width: 1116px;
    height: 14px;
    margin-top: 1px;
    background-color: #c1c1c1;
}
.corner {
    width: 17px;
    background-color: #dcdcdc;
}
.arr {
    display: block;
    flex: none;
    border: 4px solid transparent;
}
.arr-up {
    margin: 5px 0 0 4px;
    width: 9px;
    height: 13px;
    border: 0;
    position: relative;
}
.arr-up::before {
    content: "";
    position: absolute;
    border: 4px solid transparent;
    border-top: 0;
    border-bottom: 4px solid #a3a3a3;
}
.arr-down {
    width: 8px;
    height: 9px;
    margin: 0 0 5px 5px;
    border-bottom: 0;
    border-top: 5px solid #505050;
}
.arr-left {
    width: 9px;
    height: 8px;
    margin: 4px 4px 0 4px;
    border-left: 0;
    border-right: 5px solid #a3a3a3;
}
.arr-right {
    width: 9px;
    height: 8px;
    margin: 4px 4px 0 4px;
    border-right: 0;
    border-left: 5px solid #505050;
}

/* Barra de tareas */
.taskbar {
    height: 40px;
    background-color: #2b2f33;
    display: flex;
    align-items: stretch;
    color: #fff;
}
.tb-item {
    width: 48px;
    display: flex;
    align-items: center;
    justify-content: center;
    margin-right: 1px;
    flex: none;
    position: relative;
}
.tb-sys {
    margin-right: 0;
}
.tb-item svg {
    width: 16px;
    height: 16px;
}
.tb-item svg.big {
    width: 22px;
    height: 22px;
}
.tb-item svg.wide {
    width: 24px;
}
.tb-gap {
    margin-left: 3px;
}
.tb-active {
    background-color: #595c60;
}
.tb-open::after {
    content: "";
    position: absolute;
    left: 0;
    right: 0;
    bottom: 0;
    height: 2px;
    background-color: #76b9ed;
}
.tray {
    margin-left: auto;
    display: flex;
    align-items: center;
    font-family: "Open Sans", sans-serif;
    font-size: 11.500px;
}
.tr-warn { width: 29px; height: 26px; margin-right: 19px; }
.tr-people { width: 14px; height: 14px; margin-right: 23px; }
.tr-chev { width: 12px; height: 8px; margin-right: 10px; }
.tr-one { width: 16px; height: 12px; margin-right: 8px; }
.tr-pow { width: 17px; height: 12px; margin-right: 7px; }
.tr-net { width: 16px; height: 15px; margin-right: 8px; }
.tr-vol { width: 16px; height: 14px; margin-right: 12px; }
.tr-lang { width: 18px; margin-right: 12px; }
.clock {
    width: 66px;
    text-align: center;
    line-height: 19px;
    letter-spacing: -0.2px;
    white-space: nowrap;
    margin-right: 14px;
}
.notif {
    width: 41px;
    position: relative;
}
.notif svg {
    width: 16px;
    height: 15px;
    display: block;
}
.notif-n {
    position: absolute;
    left: 7px;
    top: 9px;
    width: 16px;
    height: 16px;
    line-height: 14px;
    text-align: center;
    border: 1px solid #777;
    border-radius: 50%;
    background-color: #2b2f33;
    font-size: 11px;
}
```
